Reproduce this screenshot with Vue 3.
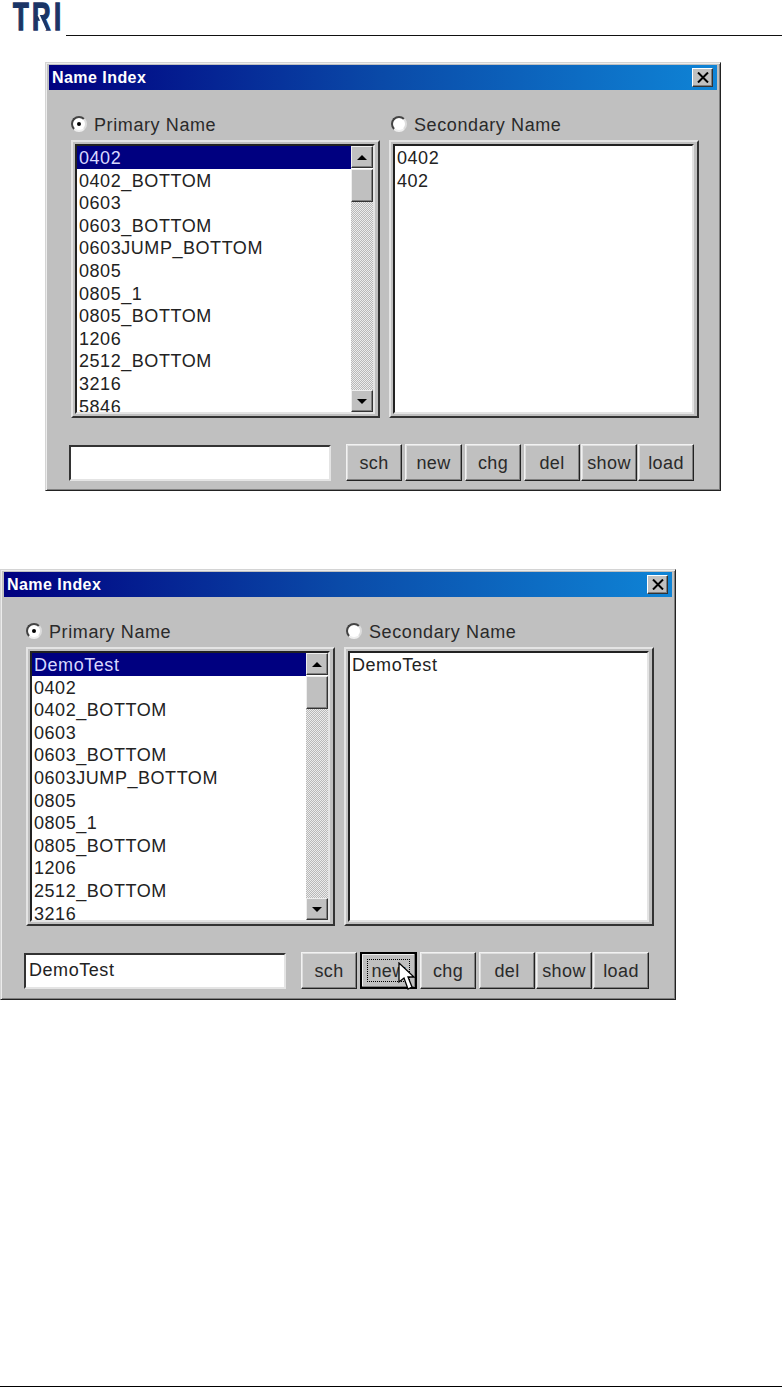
<script setup>
const dialogs = [
  {
    id: 'first',
    primary: ['0402', '0402_BOTTOM', '0603', '0603_BOTTOM', '0603JUMP_BOTTOM', '0805', '0805_1', '0805_BOTTOM', '1206', '2512_BOTTOM', '3216', '5846'],
    secondary: ['0402', '402'],
    input: '',
    focused: false,
  },
  {
    id: 'second',
    primary: ['DemoTest', '0402', '0402_BOTTOM', '0603', '0603_BOTTOM', '0603JUMP_BOTTOM', '0805', '0805_1', '0805_BOTTOM', '1206', '2512_BOTTOM', '3216'],
    secondary: ['DemoTest'],
    input: 'DemoTest',
    focused: true,
  },
]
</script>

<template>
  <div class="page">
    <header class="head">
      <div class="logo"><span>TRI</span><i class="cut"></i></div>
      <div class="rule"></div>
    </header>

    <section v-for="d in dialogs" :key="d.id" class="dialog" :class="d.id">
      <div class="title">
        <span>Name Index</span>
        <button class="close" aria-label="Close">
          <svg width="12" height="11" viewBox="0 0 12 11"><path d="M1 0.5 L11 10.5 M11 0.5 L1 10.5" stroke="#000" stroke-width="2" fill="none" /></svg>
        </button>
      </div>

      <div class="columns">
        <div class="col">
          <label class="radio"><i class="dot on"></i><span class="lbl">Primary Name</span></label>
          <div class="frame">
            <div class="well">
              <ul class="items">
                <li v-for="(t, i) in d.primary" :key="t" :class="{ sel: i === 0 }">{{ t }}</li>
              </ul>
              <div class="bar">
                <div class="sb"><i class="up"></i></div>
                <div class="sb thumb"></div>
                <div class="track"></div>
                <div class="sb"><i class="down"></i></div>
              </div>
            </div>
          </div>
        </div>
        <div class="col">
          <label class="radio right"><i class="dot"></i><span class="lbl">Secondary Name</span></label>
          <div class="frame">
            <div class="well">
              <ul class="items">
                <li v-for="t in d.secondary" :key="t">{{ t }}</li>
              </ul>
            </div>
          </div>
        </div>
      </div>

      <div class="actions">
        <div class="field">{{ d.input }}</div>
        <div class="btns">
          <button class="btn">sch</button>
          <button class="btn wide" :class="{ focus: d.focused }">
            <span>new</span>
            <svg v-if="d.focused" class="cursor" width="19" height="30" viewBox="0 0 19 30">
              <path d="M1 1 L1 20 L6 16 L10 27 L14 25 L10 15 L16 15 Z" fill="#fff" stroke="#000" stroke-width="1.3" />
            </svg>
          </button>
          <button class="btn">chg</button>
          <div class="tight">
            <button class="btn">del</button>
            <button class="btn">show</button>
            <button class="btn">load</button>
          </div>
        </div>
      </div>
    </section>

    <div class="foot"></div>
  </div>
</template>

<style>
html, body { margin: 0; background: #fff; }
</style>

<style scoped>
.page {
  width: 782px;
  height: 1387px;
  display: flex;
  flex-direction: column;
  overflow: hidden;
  font-family: "Liberation Sans", Arial, sans-serif;
  color: #222;
}
.head { height: 36px; display: flex; align-items: flex-end; flex: none; }
.logo {
  position: relative;
  width: 66px;
  height: 36px;
  box-sizing: border-box;
  padding-left: 13px;
  font: bold 39px/33px "Liberation Sans", Arial, sans-serif;
  color: #1a3566;
  -webkit-text-stroke: 1.4px #1a3566;
  letter-spacing: 5px;
}
.logo span { display: inline-block; transform: scaleX(0.66); transform-origin: left top; white-space: nowrap; }
.cut {
  position: absolute;
  left: 41px;
  top: 14px;
  width: 2px;
  height: 17px;
  background: #fff;
  transform: rotate(-24deg);
}
.rule { flex: 1; border-bottom: 1px solid #111; }

.dialog {
  width: 676px;
  height: 431px;
  box-sizing: border-box;
  flex: none;
  background: #c0c0c0;
  border: 1px solid;
  border-color: #d4d4d4 #222 #222 #d4d4d4;
  box-shadow: inset 1px 1px 0 #ececec, inset -1px -1px 0 #808080;
  padding: 2px 3px 0;
}
.first { margin: 26px 0 0 45px; height: 429px; }
.second { margin: 78px 0 0 0; }
.second .frame { height: 279px; }

.title {
  height: 25px;
  padding: 0 4px 0 3px;
  display: flex;
  align-items: center;
  justify-content: space-between;
  background: linear-gradient(90deg, #000080 0%, #0a4aa8 50%, #0f84d6 100%);
  color: #fff;
  font-size: 16px;
  font-weight: bold;
  letter-spacing: 0.45px;
}
.close {
  width: 21px;
  height: 19px;
  padding: 0;
  display: flex;
  align-items: center;
  justify-content: center;
  background: #c0c0c0;
  border: 1px solid;
  border-color: #fff #333 #333 #fff;
  box-shadow: inset -1px -1px 0 #808080;
}

.columns { display: flex; gap: 9px; padding: 24px 0 0 22px; }
.col { width: 309px; }
.col + .col { width: 310px; }
.radio {
  height: 20px;
  margin-bottom: 6px;
  display: flex;
  align-items: center;
  gap: 7px;
  font-size: 18px;
  line-height: 20px;
  letter-spacing: 0.6px;
  color: #2a2a2a;
}
.lbl { padding-top: 2px; }
.radio.right { padding-left: 2px; }
.dot {
  width: 16px;
  height: 16px;
  box-sizing: border-box;
  flex: none;
  border-radius: 50%;
  background: #fff;
  border: 2px solid;
  border-color: #444 #ddd #eee #444;
  position: relative;
}
.dot.on::after {
  content: "";
  position: absolute;
  left: 4px;
  top: 4px;
  width: 4px;
  height: 4px;
  border-radius: 50%;
  background: #000;
}
.frame {
  height: 278px;
  box-sizing: border-box;
  padding: 2px 3px 2px 2px;
  background: #c0c0c0;
  border: 2px solid;
  border-color: #e4e4e4 #333 #333 #e4e4e4;
}
.well {
  height: 100%;
  box-sizing: border-box;
  display: flex;
  background: #fff;
  border: 2px solid;
  border-color: #222 #e4e4e4 #e4e4e4 #222;
  overflow: hidden;
}
.items {
  flex: 1;
  min-width: 0;
  margin: 0;
  padding: 0;
  list-style: none;
  font-size: 18px;
  letter-spacing: 0.55px;
  overflow: hidden;
}
.items li { height: 22.6px; line-height: 24px; padding-left: 2px; white-space: nowrap; }
.items li.sel { background: #000080; color: #d8d8ff; }
.bar { width: 22px; flex: none; display: flex; flex-direction: column; }
.sb {
  height: 22px;
  flex: none;
  box-sizing: border-box;
  background: #c0c0c0;
  border: 1px solid;
  border-color: #eee #333 #333 #eee;
  box-shadow: inset -1px -1px 0 #808080;
  display: flex;
  align-items: center;
  justify-content: center;
}
.thumb { height: 33px; margin-top: 1px; }
.track {
  flex: 1;
  background-image: conic-gradient(#ececec 25%, #b8b8b8 0 50%, #ececec 0 75%, #b8b8b8 0);
  background-size: 2px 2px;
}
.up, .down { width: 0; height: 0; border: 5px solid transparent; }
.up { border-bottom: 5px solid #000; border-top: 0; }
.down { border-top: 5px solid #000; border-bottom: 0; }

.actions { display: flex; gap: 15px; padding: 26px 0 0 20px; }
.field {
  width: 262px;
  height: 36px;
  margin-top: 1px;
  box-sizing: border-box;
  padding: 0 3px;
  background: #fff;
  border: 2px solid;
  border-color: #333 #e4e4e4 #e4e4e4 #333;
  font-size: 18px;
  letter-spacing: 0.55px;
  line-height: 30px;
}
.btns, .tight { display: flex; gap: 3px; }
.tight { gap: 1px; }
.btn {
  width: 56px;
  height: 37px;
  padding: 2px 0 0;
  position: relative;
  background: #c0c0c0;
  border: 1px solid;
  border-color: #f2f2f2 #222 #222 #f2f2f2;
  box-shadow: inset -1px -1px 0 #808080, inset 1px 1px 0 #dedede;
  font-family: inherit;
  font-size: 18px;
  letter-spacing: 0.4px;
  color: #2a2a2a;
}
.wide { width: 57px; }
.focus {
  border: 2px solid #000;
  box-shadow: inset -1px -1px 0 #808080, inset 1px 1px 0 #eee;
  outline: 1px dotted #000;
  outline-offset: -8px;
}
.cursor { position: absolute; left: 36px; top: 8px; }
.foot {
  flex: none;
  margin-top: auto;
  height: 1px;
  background: #000;
}
</style>
